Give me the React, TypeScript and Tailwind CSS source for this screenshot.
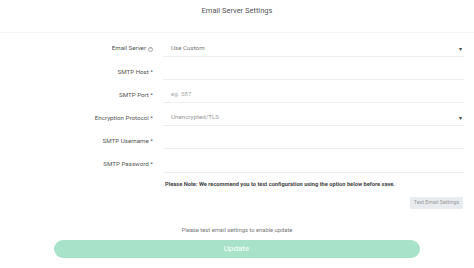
import React from 'react';

const rows = [
  { label: 'Email Server', info: true, value: 'Use Custom', select: true },
  { label: 'SMTP Host *' },
  { label: 'SMTP Port *', placeholder: 'eg. 587' },
  { label: 'Encryption Protocol *', value: 'Unencrypted/TLS', select: true, muted: true },
  { label: 'SMTP Username *' },
  { label: 'SMTP Password *' },
];

function App() {
  return (
    <div className="min-h-screen w-full bg-white text-[#555]" style={{ fontFamily: 'Roboto, sans-serif' }}>
      <header className="flex h-[33px] justify-center border-b border-[#f2f3f5] pt-[7px]">
        <h1 className="text-[7.5px] leading-[8px] text-[#555]">Email Server Settings</h1>
      </header>

      <div className="flex flex-col pt-[1px]">
        {rows.map((r) => (
          <div key={r.label} className="flex h-[23.1px] items-end">
            <div className="flex h-[16px] w-[153px] items-center justify-end gap-[2px] text-[6.2px] text-[#555]">
              <span>{r.label}</span>
              {r.info && (
                <span className="flex h-[5px] w-[5px] items-center justify-center rounded-full border-[0.5px] border-[#aaa] text-[4px] leading-none text-[#999]">
                  ?
                </span>
              )}
            </div>
            <div className="ml-[10px] mr-[10px] flex h-[16px] flex-1 items-center justify-between border-b border-[#eceef0] pl-[8px] pr-[2px] text-[6.2px]">
              {r.value && <span className={r.muted ? 'text-[#999]' : 'text-[#777]'}>{r.value}</span>}
              {r.placeholder && <span className="text-[#aaa]">{r.placeholder}</span>}
              {!r.value && !r.placeholder && <span />}
              {r.select && <span className="text-[6px] leading-none text-[#444]">▾</span>}
            </div>
          </div>
        ))}
      </div>

      <p className="ml-[165px] mt-[7px] text-[5.7px] font-bold leading-[8px] text-[#444]">
        Please Note: We recommend you to test configuration using the option below before save.
      </p>

      <div className="mr-[11px] mt-[9px] flex justify-end">
        <button className="h-[12px] w-[53px] rounded-[1px] bg-[#e9ecef] text-[5.3px] leading-none text-[#999]">
          Test Email Settings
        </button>
      </div>

      <p className="mt-[17px] text-center text-[5.8px] leading-[8px] text-[#777]">
        Please test email settings to enable update
      </p>

      <div className="mt-[6px] flex justify-center">
        <button className="ml-[-1px] h-[18px] w-[366px] rounded-full bg-[#a8e2c9] text-[8px] leading-none text-white">
          Update
        </button>
      </div>
    </div>
  );
}

export default App;
